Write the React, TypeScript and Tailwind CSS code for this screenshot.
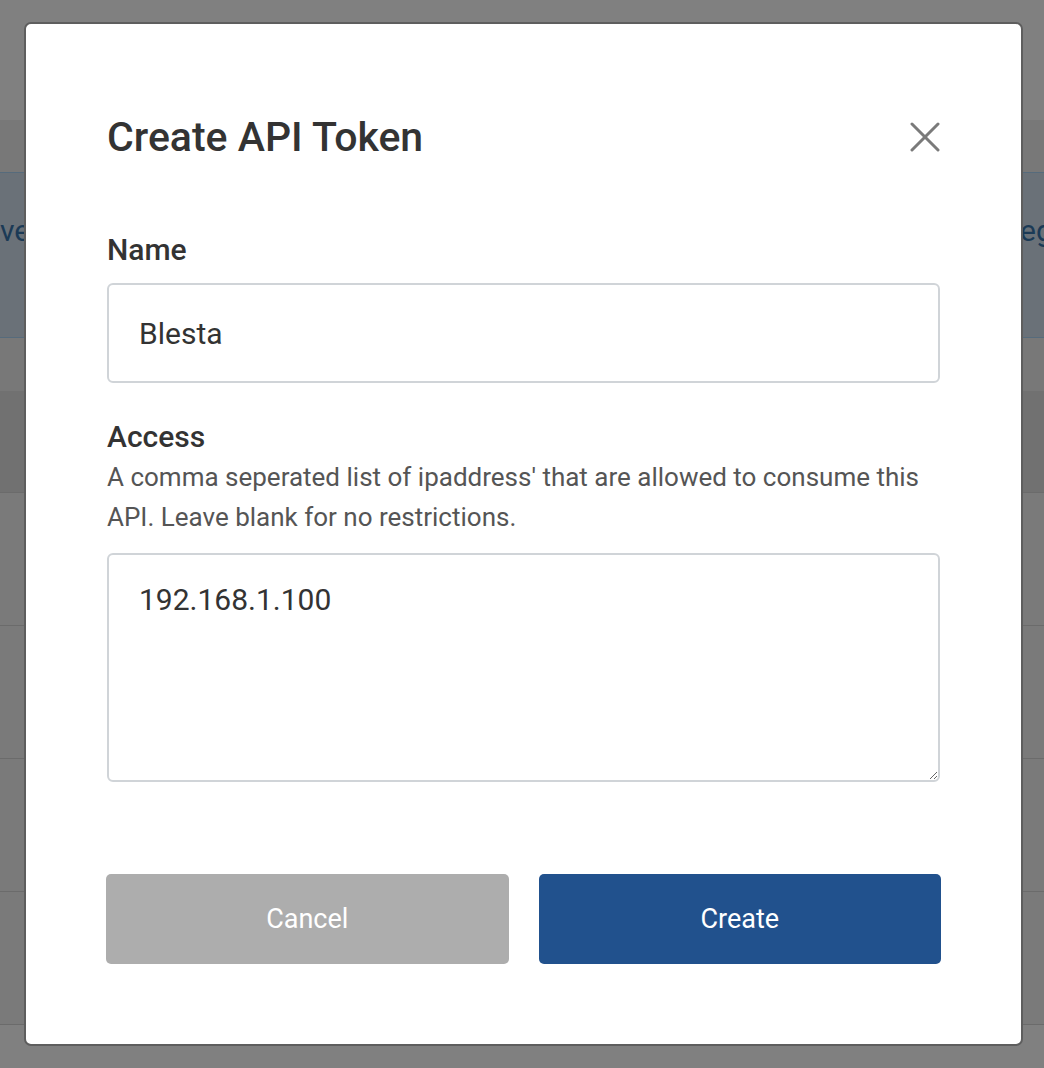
import React from 'react';

// Backdrop rows of the (dimmed) table behind the dialog
const lowerRows = ['r1', 'r2', 'r3', 'r4'];

function CloseIcon() {
  return (
    <svg width="30" height="30" viewBox="0 0 30 30" fill="none" stroke="#7a7a7a" strokeWidth="3" strokeLinecap="round">
      <line x1="2" y1="2" x2="28" y2="28" />
      <line x1="28" y1="2" x2="2" y2="28" />
    </svg>
  );
}

export default function App() {
  return (
    <div className="relative h-[1068px] w-full overflow-hidden bg-[#808080] font-['Roboto',sans-serif]">
      {/* Page behind the overlay */}
      <div className="h-[120px]" />
      <div className="h-[52px] bg-[#787878]" />
      <div className="flex h-[166px] border-y border-[#566b7c] bg-[#6a7178] pt-[40px] text-[30px] leading-[36px] text-[#1b3a56] whitespace-nowrap">
        <span className="w-[1020px] shrink-0">ve</span>
        <span className="shrink-0">egistered</span>
      </div>
      <div className="h-[53px] bg-[#787878]" />
      <div className="h-[101px] bg-[#717171]" />
      {lowerRows.map((r) => (
        <div key={r} className="h-[133px] border-t border-[#6b6b6b] bg-[#7a7a7a]" />
      ))}
      <div className="border-t border-[#6b6b6b]" />

      {/* Dialog */}
      <div className="absolute left-[24px] top-[22px] w-[999px] rounded-[7px] border-2 border-[#5e5e5e] bg-white px-[81px] pt-[91px] pb-[80px]">
        <div className="flex h-[44px] items-center justify-between">
          <h2 className="text-[41px] font-medium leading-[44px] text-[#333333]">Create API Token</h2>
          <button className="cursor-pointer">
            <CloseIcon />
          </button>
        </div>

        <label className="mt-[74px] block text-[30px] font-medium leading-[34px] text-[#333333]">Name</label>
        <input
          defaultValue="Blesta"
          className="mt-[16px] block h-[100px] w-full rounded-[6px] border-2 border-[#d0d4d8] px-[30px] text-[30px] text-[#333333] outline-none"
        />

        <label className="mt-[37px] block text-[30px] font-medium leading-[34px] text-[#333333]">Access</label>
        <p className="mt-[3px] text-[26px] leading-[40px] text-[#555555]">
          A comma seperated list of ipaddress' that are allowed to consume this API. Leave blank for no restrictions.
        </p>
        <textarea
          defaultValue="192.168.1.100"
          className="mt-[16px] block h-[229px] w-full rounded-[6px] border-2 border-[#d0d4d8] px-[30px] pt-[28px] text-[30px] leading-[34px] text-[#333333] outline-none"
        />

        <div className="-mx-px mt-[92px] grid grid-cols-2 gap-[30px]">
          <button className="h-[90px] rounded-[5px] bg-[#adadad] text-[27px] text-white">Cancel</button>
          <button className="h-[90px] rounded-[5px] bg-[#21518d] text-[27px] text-white">Create</button>
        </div>
      </div>
    </div>
  );
}
